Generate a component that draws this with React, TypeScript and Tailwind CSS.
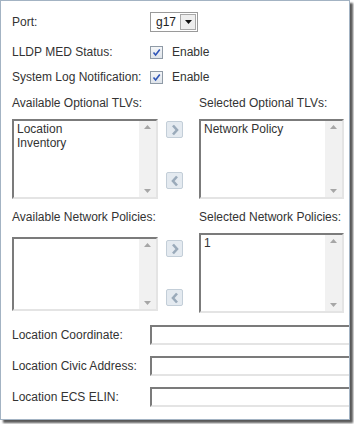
import { ReactNode } from "react";

function Checkbox() {
  return (
    <span className="flex h-[13px] w-[13px] items-center justify-center border border-[#8f9aa6] bg-gradient-to-b from-[#f4f6f8] to-[#dfe4ea]">
      <svg width="9" height="9" viewBox="0 0 9 9">
        <path d="M1.5 4.5 L3.6 7 L7.8 1.5" fill="none" stroke="#2f55b8" strokeWidth="1.6" />
      </svg>
    </span>
  );
}

function MoveButton({ dir }: { dir: "right" | "left" }) {
  return (
    <div className="flex h-[17px] w-[17px] items-center justify-center rounded-[2px] border border-[#c3ced8] bg-[#e4eaf0]">
      <svg width="10" height="12" viewBox="0 0 10 12">
        <path
          d={dir === "right" ? "M3 1.5 L7 6 L3 10.5" : "M7 1.5 L3 6 L7 10.5"}
          fill="none"
          stroke="#9aaaba"
          strokeWidth="2.6"
        />
      </svg>
    </div>
  );
}

function ListBox({ items, className }: { items: string[]; className: string }) {
  return (
    <div className={`flex shrink-0 border-2 border-t-[#7b7b7b] border-l-[#7b7b7b] border-r-[#e4e4e4] border-b-[#e4e4e4] bg-white ${className}`}>
      <div className="flex-1 px-[3px] pt-[1px] leading-[14px]">
        {items.map((it) => (
          <div key={it}>{it}</div>
        ))}
      </div>
      <div className="flex w-[17px] flex-col items-center justify-between bg-[#f1f1f1] py-[4px]">
        <svg width="7" height="4" viewBox="0 0 7 4">
          <path d="M0 4 L3.5 0 L7 4 Z" fill="#a6a6a6" />
        </svg>
        <svg width="7" height="4" viewBox="0 0 7 4">
          <path d="M0 0 L3.5 4 L7 0 Z" fill="#a6a6a6" />
        </svg>
      </div>
    </div>
  );
}

function TextRow({ label, className }: { label: string; className: string }) {
  return (
    <div className={`flex h-[20px] items-center ${className}`}>
      <span className="w-[138px] shrink-0">{label}</span>
      <div className="h-[20px] w-[210px] shrink-0 border-2 border-t-[#7b7b7b] border-l-[#7b7b7b] border-r-[#e4e4e4] border-b-[#e4e4e4] bg-white" />
    </div>
  );
}

function Row({ label, children, className }: { label: string; children: ReactNode; className: string }) {
  return (
    <div className={`flex h-[20px] items-center ${className}`}>
      <span className="w-[138px] shrink-0">{label}</span>
      {children}
    </div>
  );
}

export default function App() {
  return (
    <div className="h-[424px] w-[354px] bg-white">
      <div
        className="h-[420px] w-[350px] overflow-hidden border border-[#a3b3c3] bg-white text-[12px] text-[#333] shadow-[3px_3px_2px_rgba(0,0,0,0.65)]"
        style={{ fontFamily: '"Liberation Sans", Arial, sans-serif' }}
      >
        <div className="flex flex-col pl-[11px] pt-[11px]">
          <Row label="Port:" className="">
            <div className="flex h-[20px] w-[48px] items-center border border-[#9a9a9a] bg-white">
              <span className="flex-1 pl-[5px] text-[#222]">g17</span>
              <span className="mr-[1px] flex h-[16px] w-[16px] items-center justify-center border border-[#a8a8a8] bg-[#eeeeee]">
                <svg width="7" height="4" viewBox="0 0 7 4">
                  <path d="M0 0 L3.5 4 L7 0 Z" fill="#111" />
                </svg>
              </span>
            </div>
          </Row>
          <Row label="LLDP MED Status:" className="mt-[10px]">
            <Checkbox />
            <span className="ml-[9px]">Enable</span>
          </Row>
          <Row label="System Log Notification:" className="mt-[5px]">
            <Checkbox />
            <span className="ml-[9px]">Enable</span>
          </Row>

          <div className="mt-[9px] flex h-[14px] items-center">
            <span className="w-[187px] shrink-0">Available Optional TLVs:</span>
            <span>Selected Optional TLVs:</span>
          </div>
          <div className="mt-[9px] flex h-[80px]">
            <ListBox items={["Location", "Inventory"]} className="h-[80px] w-[146px]" />
            <div className="flex w-[41px] shrink-0 flex-col items-start justify-between pb-[10px] pl-[8px] pt-[2px]">
              <MoveButton dir="right" />
              <MoveButton dir="left" />
            </div>
            <ListBox items={["Network Policy"]} className="h-[80px] w-[145px]" />
          </div>

          <div className="mt-[11px] flex h-[14px] items-center">
            <span className="w-[187px] shrink-0">Available Network Policies:</span>
            <span>Selected Network Policies:</span>
          </div>
          <div className="mt-[9px] flex h-[80px]">
            <ListBox items={[]} className="mt-[4px] h-[74px] w-[146px]" />
            <div className="flex w-[41px] shrink-0 flex-col items-start justify-between pb-[7px] pl-[8px] pt-[7px]">
              <MoveButton dir="right" />
              <MoveButton dir="left" />
            </div>
            <ListBox items={["1"]} className="h-[80px] w-[145px]" />
          </div>

          <TextRow label="Location Coordinate:" className="mt-[12px]" />
          <TextRow label="Location Civic Address:" className="mt-[11px]" />
          <TextRow label="Location ECS ELIN:" className="mt-[11px]" />
        </div>
      </div>
    </div>
  );
}
